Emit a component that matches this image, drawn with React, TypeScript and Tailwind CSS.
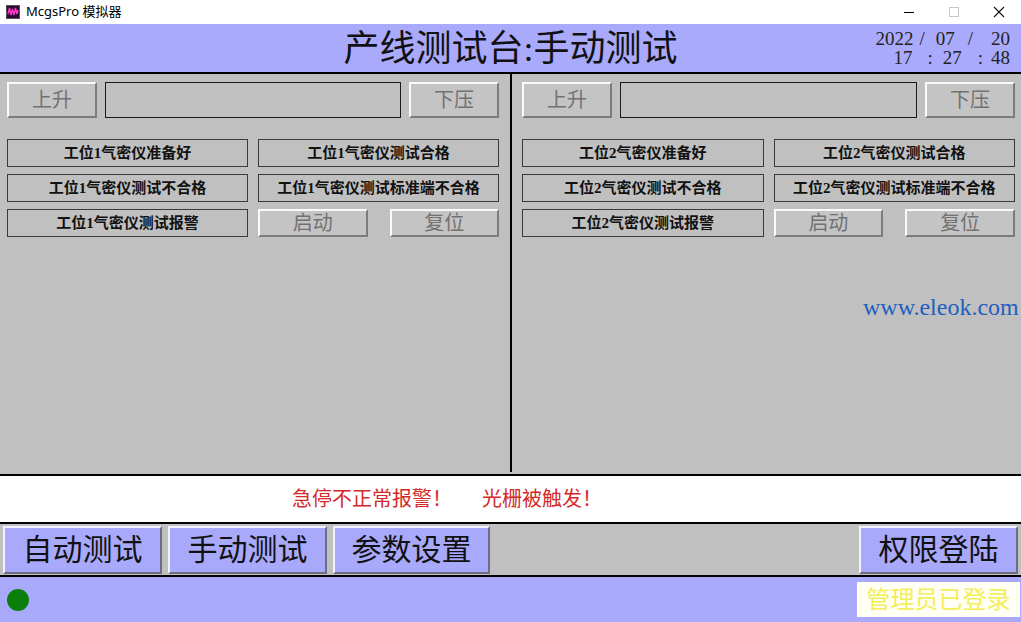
import React from "react";

const serif = { fontFamily: '"Liberation Serif", "Noto Sans CJK SC", serif' };

function RaisedButton({ label, className = "" }: { label: string; className?: string }) {
  return (
    <div
      className={
        "flex items-center justify-center bg-[#c4c4c4] border-t-2 border-l-2 border-b-2 border-r-2 border-t-[#fafafa] border-l-[#fafafa] border-b-[#7c7c7c] border-r-[#7c7c7c] text-[20px] text-[#727272] leading-none " +
        className
      }
    >
      {label}
    </div>
  );
}

function StatusLabel({ label, className = "" }: { label: string; className?: string }) {
  return (
    <div
      className={
        "flex items-center justify-center h-[28px] border border-[#3a3a3a] bg-[#c0c0c0] text-[15px] font-bold text-[#111] leading-none " +
        className
      }
    >
      {label}
    </div>
  );
}

function StationPanel({ n, padding }: { n: number; padding: string }) {
  return (
    <div className={"flex flex-col pt-[8px] " + padding}>
      <div className="flex h-[36px] gap-[8px]">
        <RaisedButton label="上升" className="w-[90px]" />
        <div className="flex-1 border border-[#1a1a1a] bg-[#c0c0c0]" />
        <RaisedButton label="下压" className="w-[90px]" />
      </div>
      <div className="mt-[21px] grid grid-cols-2 gap-x-[10px] gap-y-[7px]">
        <StatusLabel label={`工位${n}气密仪准备好`} />
        <StatusLabel label={`工位${n}气密仪测试合格`} />
        <StatusLabel label={`工位${n}气密仪测试不合格`} />
        <StatusLabel label={`工位${n}气密仪测试标准端不合格`} />
        <StatusLabel label={`工位${n}气密仪测试报警`} />
        <div className="flex h-[28px] justify-between gap-[22px]">
          <RaisedButton label="启动" className="flex-1" />
          <RaisedButton label="复位" className="flex-1" />
        </div>
      </div>
    </div>
  );
}

function NavButton({ label, className = "" }: { label: string; className?: string }) {
  return (
    <div
      className={
        "flex items-center justify-center h-[48px] bg-[#a9a9fb] border-t-2 border-l-2 border-b-2 border-r-2 border-t-[#f4f4ff] border-l-[#f4f4ff] border-b-[#6e6e80] border-r-[#6e6e80] text-[30px] text-[#111] leading-none " +
        className
      }
    >
      {label}
    </div>
  );
}

function AppIcon() {
  return (
    <svg width="14" height="14" viewBox="0 0 14 14">
      <rect x="0.5" y="0.5" width="13" height="13" fill="#2a0830" stroke="#555" />
      <path d="M2 9 L3.5 3 L5 10 L6.5 4 L8 10 L9.5 3 L11 9 L12 5" fill="none" stroke="#ff3cc8" strokeWidth="1.4" />
    </svg>
  );
}

export default function App() {
  return (
    <div className="w-[1021px] h-[622px] flex flex-col bg-[#c0c0c0] overflow-hidden relative" style={serif}>
      {/* window title bar */}
      <div
        className="h-[24px] bg-white flex items-center pl-[6px] text-[13px] text-black shrink-0"
        style={{ fontFamily: '"Noto Sans", "Noto Sans CJK SC", sans-serif' }}
      >
        <AppIcon />
        <span className="ml-[6px]">McgsPro 模拟器</span>
        <div className="ml-auto flex items-center h-full">
          <div className="w-[45px] flex justify-center">
            <div className="w-[10px] h-[1px] bg-black" />
          </div>
          <div className="w-[45px] flex justify-center">
            <div className="w-[10px] h-[10px] border border-[#c8c8c8]" />
          </div>
          <div className="w-[45px] flex justify-center">
            <svg width="12" height="12" viewBox="0 0 12 12">
              <path d="M1 1 L11 11 M11 1 L1 11" stroke="#111" strokeWidth="1.1" />
            </svg>
          </div>
        </div>
      </div>

      {/* header */}
      <div className="h-[50px] bg-[#aaaafc] border-b-2 border-black flex items-center relative shrink-0">
        <div className="flex-1 text-center text-[36px] leading-none text-[#111] pt-[2px]">产线测试台:手动测试</div>
        <div className="absolute right-[11px] top-[5px] text-[19px] leading-[19px] text-[#222] flex flex-col items-end">
          <div className="flex">
            <span>2022</span>
            <span className="ml-[6px]">/</span>
            <span className="ml-[11px]">07</span>
            <span className="ml-[13px]">/</span>
            <span className="ml-[18px]">20</span>
          </div>
          <div className="flex">
            <span>17</span>
            <span className="ml-[15px]">:</span>
            <span className="ml-[10px]">27</span>
            <span className="ml-[16px]">:</span>
            <span className="ml-[8px]">48</span>
          </div>
        </div>
      </div>

      {/* station panels */}
      <div className="h-[402px] flex border-b-2 border-black shrink-0">
        <div className="w-[510px]">
          <StationPanel n={1} padding="pl-[7px] pr-[11px]" />
        </div>
        <div className="w-[2px] bg-black mb-[2px]" />
        <div className="flex-1 relative">
          <StationPanel n={2} padding="pl-[10px] pr-[6px]" />
          <div className="absolute left-[351px] top-[221px] text-[24px] text-[#1f5fbf] leading-none">
            www.eleok.com
          </div>
        </div>
      </div>

      {/* alarm message line */}
      <div className="h-[48px] bg-white border-b-2 border-black flex items-center pl-[292px] text-[20px] text-[#d42a2a] shrink-0">
        <span>急停不正常报警！</span>
        <span className="ml-[30px]">光栅被触发！</span>
      </div>

      {/* navigation bar */}
      <div className="h-[53px] flex items-center pl-[3px] pr-[3px] border-b-2 border-black shrink-0">
        <NavButton label="自动测试" className="w-[159px]" />
        <NavButton label="手动测试" className="w-[159px] ml-[6px]" />
        <NavButton label="参数设置" className="w-[157px] ml-[6px]" />
        <NavButton label="权限登陆" className="w-[159px] ml-auto" />
      </div>

      {/* status bar */}
      <div className="flex-1 bg-[#aaaafc] flex items-center pl-[7px] pr-[1px]">
        <div className="w-[22px] h-[22px] rounded-full bg-[#0a800a]" />
        <div className="ml-auto w-[163px] h-[35px] bg-[#fffff4] flex items-center justify-center text-[24px] text-[#f4ee5a] leading-none">
          管理员已登录
        </div>
      </div>
    </div>
  );
}
